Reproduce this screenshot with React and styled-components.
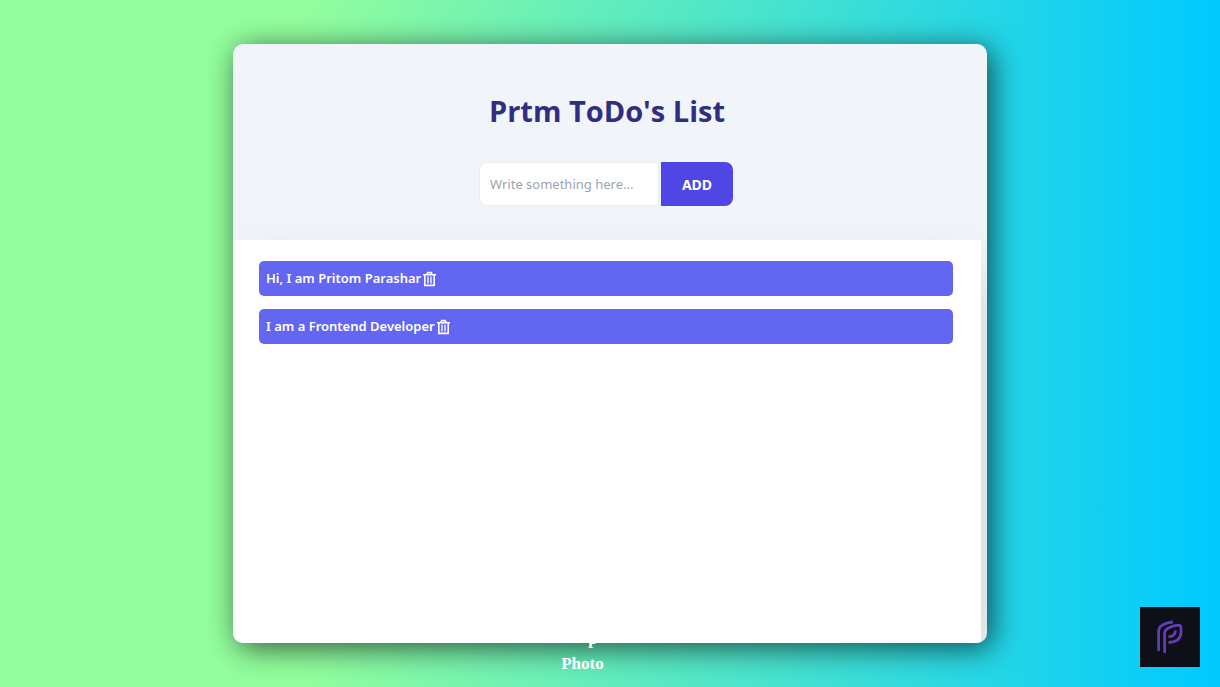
import React, { useState } from "react";
import styled, { createGlobalStyle } from "styled-components";

const GlobalStyle = createGlobalStyle`
  *, *::before, *::after { box-sizing: border-box; }
  body {
    margin: 0;
    font-family: "Segoe UI", "Noto Sans", "Open Sans", sans-serif;
    font-size: 13px;
    line-height: 21px;
  }
`;

const Page = styled.div`
  position: relative;
  min-height: 100vh;
  padding: 44px 19.1%;
  background: linear-gradient(to right, #92fe9d 25%, #00c9ff 100%);
  overflow: hidden;
`;

const Card = styled.main`
  display: flex;
  flex-direction: column;
  min-height: calc(100vh - 88px);
  padding-right: 6px;
  border-radius: 10px;
  overflow: hidden;
  background: #f1f5f9;
  box-shadow: 5px 5px 30px rgba(0, 0, 0, 0.65);
`;

const Header = styled.header`
  display: flex;
  flex-direction: column;
  align-items: center;
  gap: 31px;
  padding: 47px 0 34px;
`;

const Title = styled.h1`
  margin: 0;
  color: #312e81;
  font-family: "Segoe UI", "Open Sans", sans-serif;
  font-size: 29px;
  line-height: 40px;
  font-weight: 700;
`;

const Form = styled.form`
  display: flex;
  gap: 2px;
  padding-right: 2px;
`;

const TextBox = styled.input`
  width: 180px;
  height: 44px;
  padding: 0 10px;
  border: 1px solid #e9ecf0;
  border-radius: 8px 0 0 8px;
  background: #fff;
  color: #1f2937;
  font: inherit;
  outline: none;
  &::placeholder { color: #9ca3af; opacity: 1; }
`;

const AddButton = styled.button`
  width: 72px;
  height: 44px;
  border: 0;
  border-radius: 0 8px 8px 0;
  background: #4f46e5;
  color: #fff;
  font: inherit;
  font-size: 14px;
  font-weight: 700;
  cursor: pointer;
`;

const List = styled.ul`
  flex: 1;
  display: flex;
  flex-direction: column;
  gap: 13px;
  margin: 0;
  padding: 21px 28px 21px 26px;
  list-style: none;
  background: #fff;
  box-shadow: 0 25px 50px -12px rgba(0, 0, 0, 0.25);
`;

const Item = styled.li`
  display: flex;
  align-items: center;
  gap: 2px;
  padding: 7px;
  border-radius: 5px;
  background: #6366f1;
  color: #fff;
  font-weight: 600;
`;

const DeleteButton = styled.button`
  display: flex;
  padding: 0;
  border: 0;
  background: none;
  color: inherit;
  cursor: pointer;
`;

const Credit = styled.div`
  position: absolute;
  bottom: 0;
  left: 46%;
  display: flex;
  flex-direction: column;
  justify-content: flex-end;
  height: 44px;
  padding-bottom: 11px;
  overflow: hidden;
  color: #fff;
  font: 700 17px/25px "Liberation Serif", serif;
`;

const CreditTop = styled.span`
  padding-left: 27px;
`;

const Badge = styled.a`
  position: absolute;
  right: 20px;
  bottom: 20px;
  display: flex;
  width: 60px;
  height: 60px;
  background: #0d1117;
`;

const TrashIcon = () => (
  <svg width="13" height="16" viewBox="0 0 13 16" fill="none" stroke="currentColor" strokeWidth="1.6" aria-hidden="true">
    <path d="M0 3.8h13M3.8 3.4L4.8 1.6h3.4L9.2 3.4M1.8 4V14.4H11.2V4" />
    <path d="M5 5.5v7M8 5.5v7" strokeWidth="1.3" />
  </svg>
);

const Logo = () => (
  <svg width="60" height="60" viewBox="0 0 60 60" fill="none" stroke="#673ab7" strokeWidth="2.8" aria-hidden="true">
    <path d="M18.6 44V24.5Q18.6 20 23 17.7Q27 15.3 33 15" />
    <path d="M24.6 46V26.5Q24.6 22.8 28 21.2Q33 18.6 38 18.2Q41 18.2 41 21V25.5Q40.5 35 28.5 35.5" />
    <path d="M28.5 29.8Q35.3 29.3 35.4 23.5" />
  </svg>
);

export default function App() {
  const [items, setItems] = useState(["Hi, I am Pritom Parashar", "I am a Frontend Developer"]);
  const [text, setText] = useState("");

  const add = (event) => {
    event.preventDefault();
    if (!text.trim()) return;
    setItems([...items, text.trim()]);
    setText("");
  };

  return (
    <Page>
      <GlobalStyle />
      <Card>
        <Header>
          <Title>Prtm ToDo's List</Title>
          <Form onSubmit={add}>
            <TextBox
              aria-label="New task"
              placeholder="Write something here..."
              value={text}
              onChange={(event) => setText(event.target.value)}
            />
            <AddButton type="submit">ADD</AddButton>
          </Form>
        </Header>
        <List>
          {items.map((item, index) => (
            <Item key={item}>
              <span>{item}</span>
              <DeleteButton
                type="button"
                aria-label={`Delete ${item}`}
                onClick={() => setItems(items.filter((_, i) => i !== index))}
              >
                <TrashIcon />
              </DeleteButton>
            </Item>
          ))}
        </List>
      </Card>
      <Credit>
        <CreditTop>p</CreditTop>
        <span>Photo</span>
      </Credit>
      <Badge href="#" aria-label="Portfolio">
        <Logo />
      </Badge>
    </Page>
  );
}
